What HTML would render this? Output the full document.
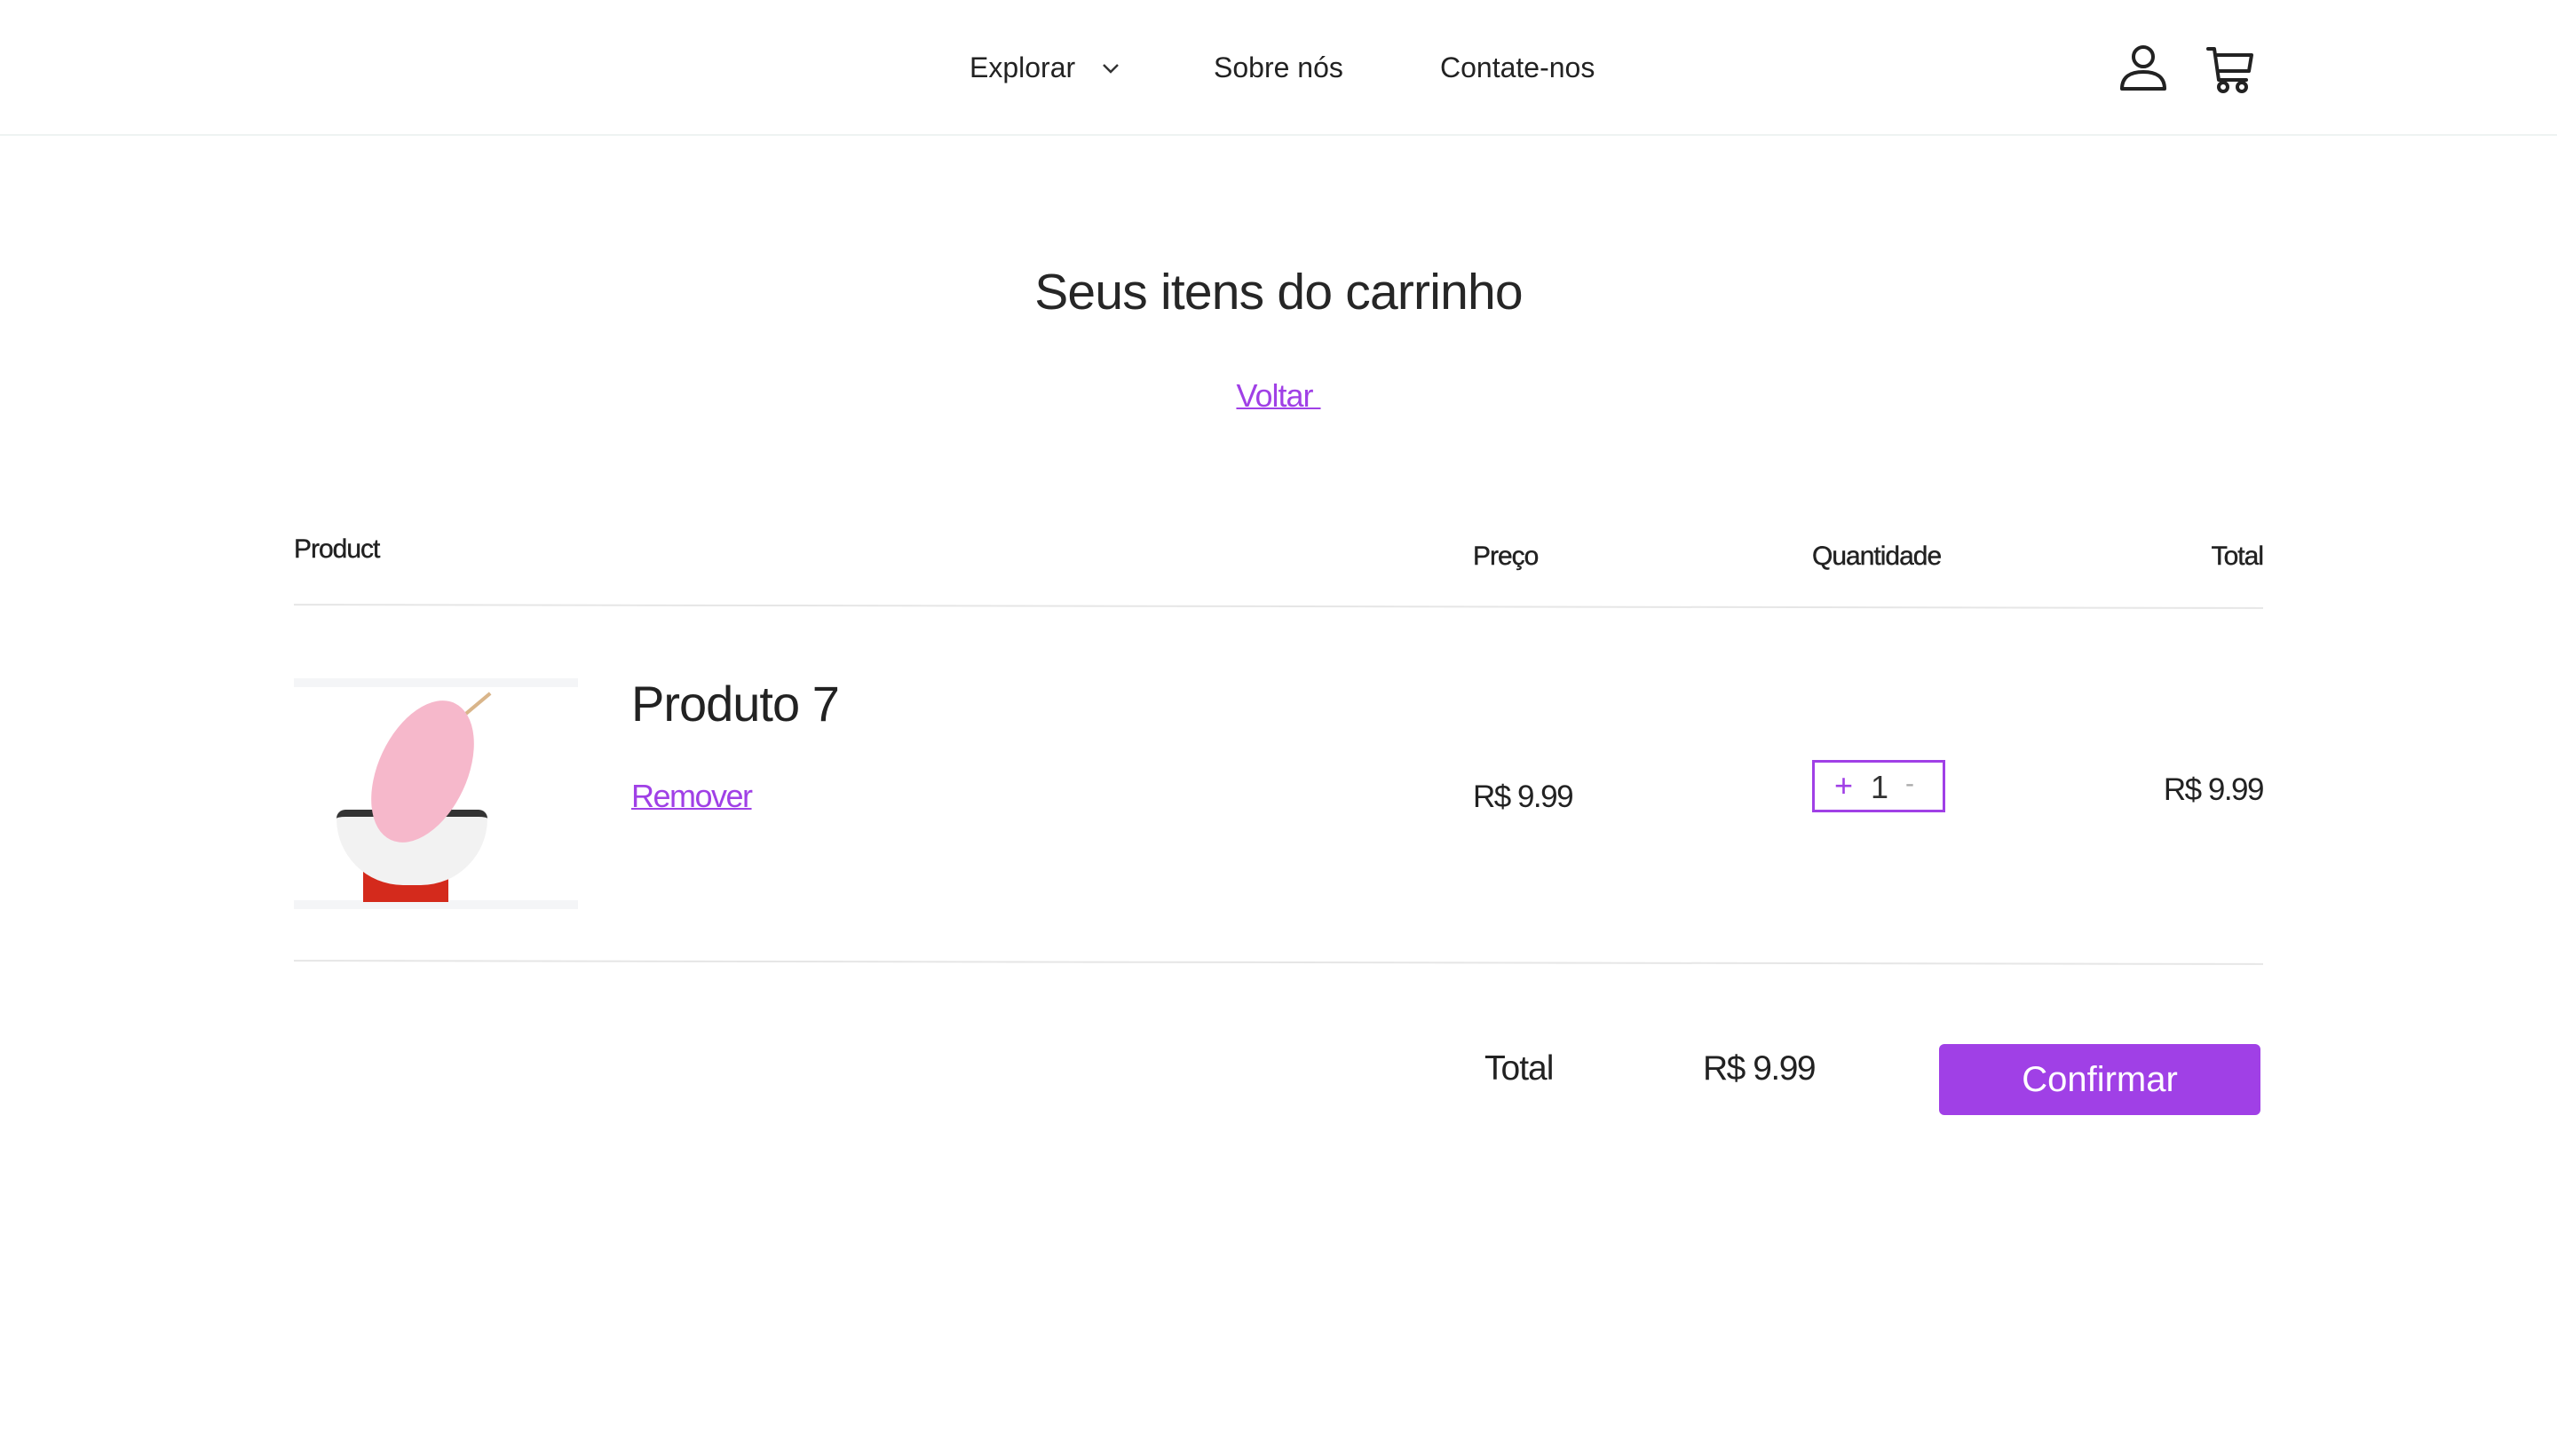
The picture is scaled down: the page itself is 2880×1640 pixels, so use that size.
<!DOCTYPE html>
<html><head><meta charset="utf-8">
<style>
*{margin:0;padding:0;box-sizing:border-box}
body{width:2880px;height:1640px;background:#fff;font-family:"Liberation Sans",sans-serif;color:#222;position:relative;overflow:hidden}
.a{position:absolute;white-space:nowrap}
.nav{font-size:32px;color:#222;top:58px}
.hdr{font-size:30px;top:604px;letter-spacing:-1px;color:#222;-webkit-text-stroke:0.4px #222}
.purple{color:#a040e6}
</style></head><body>
<div class="a" style="left:0;top:151px;width:2880px;height:2px;background:#eef3f2"></div>
<div class="a nav" style="left:1092px">Explorar</div>
<svg class="a" style="left:1240px;top:70px" width="22" height="14" viewBox="0 0 22 14"><path d="M3 3 L11 11 L19 3" fill="none" stroke="#333" stroke-width="2.5"/></svg>
<div class="a nav" style="left:1367px">Sobre nós</div>
<div class="a nav" style="left:1622px">Contate-nos</div>
<svg class="a" style="left:2384px;top:46px" width="60" height="58" viewBox="0 0 60 58"><circle cx="30" cy="18" r="11" fill="none" stroke="#222" stroke-width="4"/><path d="M6 54 C6 40 16 35 30 35 C44 35 54 40 54 54 Z" fill="none" stroke="#222" stroke-width="4" stroke-linejoin="round"/></svg>
<svg class="a" style="left:2484px;top:50px" width="58" height="56" viewBox="0 0 58 56"><path d="M3 5 H10 L15 40 H46" fill="none" stroke="#222" stroke-width="4" stroke-linecap="round" stroke-linejoin="round"/><path d="M12 12 H52 L49 30 H14" fill="none" stroke="#222" stroke-width="4" stroke-linejoin="round"/><circle cx="20" cy="48" r="5" fill="none" stroke="#222" stroke-width="4"/><circle cx="41" cy="48" r="5" fill="none" stroke="#222" stroke-width="4"/></svg>

<div class="a" style="left:0;width:2880px;text-align:center;top:296px;font-size:57px;letter-spacing:-0.8px;color:#262626">Seus itens do carrinho</div>
<div class="a purple" style="left:0;width:2880px;text-align:center;top:425px;font-size:36px;letter-spacing:-1px;text-decoration:underline;text-decoration-thickness:2px">Voltar&nbsp;</div>

<div class="a hdr" style="left:331px;top:602px">Product</div>
<div class="a hdr" style="left:1659px;top:610px">Preço</div>
<div class="a hdr" style="left:2041px;top:610px">Quantidade</div>
<div class="a hdr" style="right:331px;top:610px">Total</div>
<div class="a" style="left:331px;top:682px;width:2218px;height:2px;background:#e6e6e6;transform:rotate(0.1deg)"></div>

<div class="a" style="left:331px;top:764px;width:320px;height:260px;background:#fff;overflow:hidden">
  <div class="a" style="left:0;top:0;width:320px;height:10px;background:#f4f5f7"></div>
  <div class="a" style="left:0;top:250px;width:320px;height:10px;background:#f4f5f7"></div>
  <div class="a" style="left:200px;top:8px;width:4px;height:50px;background:#d9b58a;transform:rotate(50deg)"></div>
  <div class="a" style="left:78px;top:200px;width:96px;height:52px;background:#d42a1c;border-radius:8px 8px 0 0"></div>
  <div class="a" style="left:48px;top:148px;width:170px;height:85px;background:#f2f2f2;border-radius:10px 10px 75px 75px;border-top:8px solid #333"></div>
  <div class="a" style="left:95px;top:20px;width:100px;height:170px;background:#f6b8cb;border-radius:50%;transform:rotate(25deg)"></div>
</div>
<div class="a" style="left:711px;top:760px;font-size:56px;letter-spacing:-1px;color:#222">Produto 7</div>
<div class="a purple" style="left:711px;top:876px;font-size:36px;letter-spacing:-1.5px;text-decoration:underline;text-decoration-thickness:2px">Remover</div>
<div class="a" style="left:1659px;top:878px;font-size:35px;letter-spacing:-1.5px">R$ 9.99</div>
<div class="a" style="left:2041px;top:856px;width:150px;height:59px;border:3px solid #a040e6"></div>
<div class="a purple" style="left:2066px;top:864px;font-size:36px">+</div>
<div class="a" style="left:2107px;top:866px;font-size:36px;color:#333">1</div>
<div class="a" style="left:2146px;top:866px;font-size:30px;color:#aaa">-</div>
<div class="a" style="right:331px;top:870px;font-size:35px;letter-spacing:-1.5px">R$ 9.99</div>
<div class="a" style="left:331px;top:1083px;width:2218px;height:2px;background:#e6e6e6;transform:rotate(0.1deg)"></div>

<div class="a" style="left:1672px;top:1182px;font-size:39px;letter-spacing:-1px">Total</div>
<div class="a" style="left:1918px;top:1182px;font-size:39px;letter-spacing:-1.5px">R$ 9.99</div>
<div class="a" style="left:2184px;top:1176px;width:362px;height:80px;background:#a040e6;border-radius:6px;color:#fff;font-size:40px;text-align:center;line-height:80px">Confirmar</div>
</body></html>
